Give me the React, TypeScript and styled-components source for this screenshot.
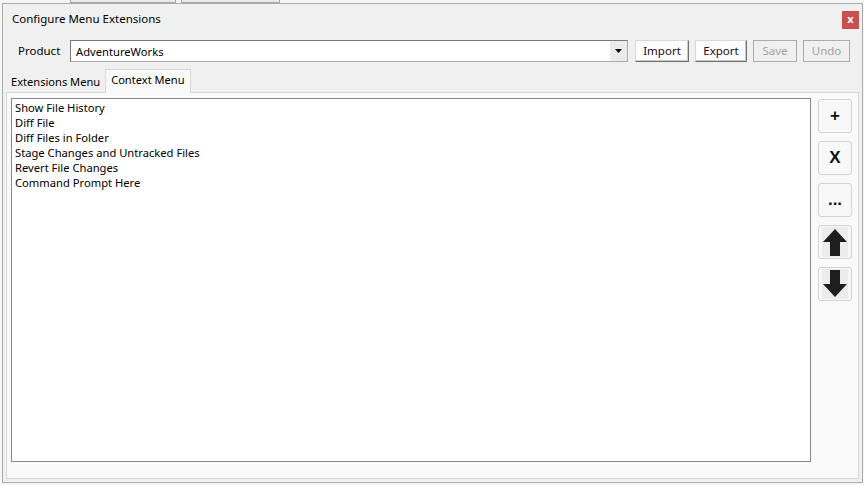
import React from "react";
import styled, { createGlobalStyle } from "styled-components";

const Global = createGlobalStyle`
  html, body {
    margin: 0;
    padding: 0;
    background: #f6f6f6;
    font-family: "Noto Sans", "Segoe UI", sans-serif;
    font-size: 11px;
    color: #000;
  }
`;

const Desktop = styled.div`
  width: 864px;
  height: 485px;
  display: flex;
  flex-direction: column;
  padding-left: 2px;
  box-sizing: border-box;
  overflow: hidden;
`;

const BehindBar = styled.div`
  height: 3px;
  display: flex;
  gap: 5px;
  padding-left: 68px;
  flex-shrink: 0;
`;

const BehindButton = styled.div<{ $w: number }>`
  width: ${(p) => p.$w}px;
  height: 2px;
  border: 1px solid #a9a9a9;
  border-top: none;
  background: #e9e9e9;
`;

const Window = styled.div`
  width: 861px;
  height: 480px;
  box-sizing: border-box;
  border: 1px solid #ababab;
  background: #f0f0f0;
  display: flex;
  flex-direction: column;
`;

const TitleBar = styled.div`
  height: 30px;
  display: flex;
  align-items: flex-start;
  justify-content: space-between;
  padding: 0 3px 0 9px;
`;

const Title = styled.div`
  margin-top: 7px;
  font-size: 11.5px;
`;

const CloseButton = styled.div`
  margin-top: 7px;
  width: 17px;
  height: 18px;
  background: #c75050;
  color: #fff;
  font-weight: bold;
  font-size: 11px;
  line-height: 16px;
  text-align: center;
`;

const Toolbar = styled.div`
  margin-top: 6px;
  height: 22px;
  display: flex;
  align-items: stretch;
  padding-left: 15px;
`;

const Label = styled.div`
  width: 52px;
  line-height: 21px;
  font-size: 11.5px;
`;

const Combo = styled.div`
  width: 558px;
  box-sizing: border-box;
  border: 1px solid #acacac;
  border-top-color: #7a7a7a;
  border-left-color: #7a7a7a;
  background: #fff;
  display: flex;
  margin-right: 7px;
`;

const ComboText = styled.div`
  flex: 1;
  padding-left: 5px;
  line-height: 21px;
  font-size: 11.2px;
`;

const ComboArrow = styled.div`
  width: 17px;
  background: #ebebeb;
  display: flex;
  align-items: center;
  justify-content: center;
  border-left: 1px solid #fff;
`;

const Button = styled.div<{ $w: number; $disabled?: boolean }>`
  width: ${(p) => p.$w}px;
  margin-right: 6px;
  box-sizing: border-box;
  text-align: center;
  line-height: 20px;
  font-size: 11.5px;
  background: ${(p) => (p.$disabled ? "#f0f0f0" : "#fdfdfd")};
  color: ${(p) => (p.$disabled ? "#a3a3a3" : "#1a0a24")};
  border: 1px solid ${(p) => (p.$disabled ? "#adadad" : "#d8d8d8")};
  border-right-color: ${(p) => (p.$disabled ? "#adadad" : "#6f6f6f")};
  border-bottom-color: ${(p) => (p.$disabled ? "#adadad" : "#6f6f6f")};
  box-shadow: ${(p) => (p.$disabled ? "none" : "inset -1px -1px 0 #c8c8c8")};
`;

const TabStrip = styled.div`
  margin-top: 6px;
  height: 24px;
  display: flex;
  align-items: flex-end;
  padding-left: 3px;
`;

const Tab = styled.div<{ $active?: boolean }>`
  box-sizing: border-box;
  height: ${(p) => (p.$active ? 24 : 21)}px;
  padding: 0 ${(p) => (p.$active ? 5 : 4)}px;
  line-height: 20px;
  font-size: 11.1px;
  background: ${(p) => (p.$active ? "#f9f9f9" : "#f0f0f0")};
  border: 1px solid ${(p) => (p.$active ? "#d9d9d9" : "transparent")};
  border-bottom: none;
  margin-bottom: ${(p) => (p.$active ? -1 : 0)}px;
  position: relative;
  z-index: ${(p) => (p.$active ? 1 : 0)};
`;

const TabPage = styled.div`
  margin: 0 3px;
  height: 387px;
  box-sizing: border-box;
  background: #f9f9f9;
  border: 1px solid #d9d9d9;
  display: flex;
  align-items: flex-start;
  padding: 5px 0 0 4px;
  gap: 7px;
`;

const ListBox = styled.div`
  width: 800px;
  height: 364px;
  box-sizing: border-box;
  background: #fff;
  border: 1px solid #828790;
  padding: 1px 3px;
`;

const ListItem = styled.div`
  height: 15px;
  line-height: 15px;
  font-size: 11.2px;
  white-space: nowrap;
`;

const SideColumn = styled.div`
  display: flex;
  flex-direction: column;
  gap: 8px;
  margin-top: 1px;
`;

const SideButton = styled.div`
  width: 34px;
  height: 34px;
  box-sizing: border-box;
  border: 1px solid #d3d3d3;
  border-radius: 3px;
  background: #f8f8f8;
  display: flex;
  align-items: center;
  justify-content: center;
  font-family: "Liberation Sans", Arial, sans-serif;
  font-weight: bold;
  font-size: 17px;
  color: #111;
`;

const Arrow = ({ down }: { down?: boolean }) => (
  <svg width="26" height="30" viewBox="0 0 26 30">
    <rect x="0" y="0" width="26" height="30" fill="#ececec" />
    <g transform={down ? "rotate(180 13 15)" : undefined}>
      <path d="M13 2 L25 15 L18 15 L18 29 L8 29 L8 15 L1 15 Z" fill="#1e1e1e" />
    </g>
  </svg>
);

const items = [
  "Show File History",
  "Diff File",
  "Diff Files in Folder",
  "Stage Changes and Untracked Files",
  "Revert File Changes",
  "Command Prompt Here",
];

export default function App() {
  return (
    <>
      <Global />
      <Desktop>
        <BehindBar>
          <BehindButton $w={104} />
          <BehindButton $w={97} />
        </BehindBar>
        <Window>
          <TitleBar>
            <Title>Configure Menu Extensions</Title>
            <CloseButton>x</CloseButton>
          </TitleBar>
          <Toolbar>
            <Label>Product</Label>
            <Combo>
              <ComboText>AdventureWorks</ComboText>
              <ComboArrow>
                <svg width="7" height="4" viewBox="0 0 7 4">
                  <path d="M0 0 H7 L3.5 4 Z" fill="#000" />
                </svg>
              </ComboArrow>
            </Combo>
            <Button $w={54}>Import</Button>
            <Button $w={52}>Export</Button>
            <Button $w={44} $disabled>
              Save
            </Button>
            <Button $w={47} $disabled>
              Undo
            </Button>
          </Toolbar>
          <TabStrip>
            <Tab>Extensions Menu</Tab>
            <Tab $active>Context Menu</Tab>
          </TabStrip>
          <TabPage>
            <ListBox>
              {items.map((t) => (
                <ListItem key={t}>{t}</ListItem>
              ))}
            </ListBox>
            <SideColumn>
              <SideButton>+</SideButton>
              <SideButton>X</SideButton>
              <SideButton>...</SideButton>
              <SideButton>
                <Arrow />
              </SideButton>
              <SideButton>
                <Arrow down />
              </SideButton>
            </SideColumn>
          </TabPage>
        </Window>
      </Desktop>
    </>
  );
}
